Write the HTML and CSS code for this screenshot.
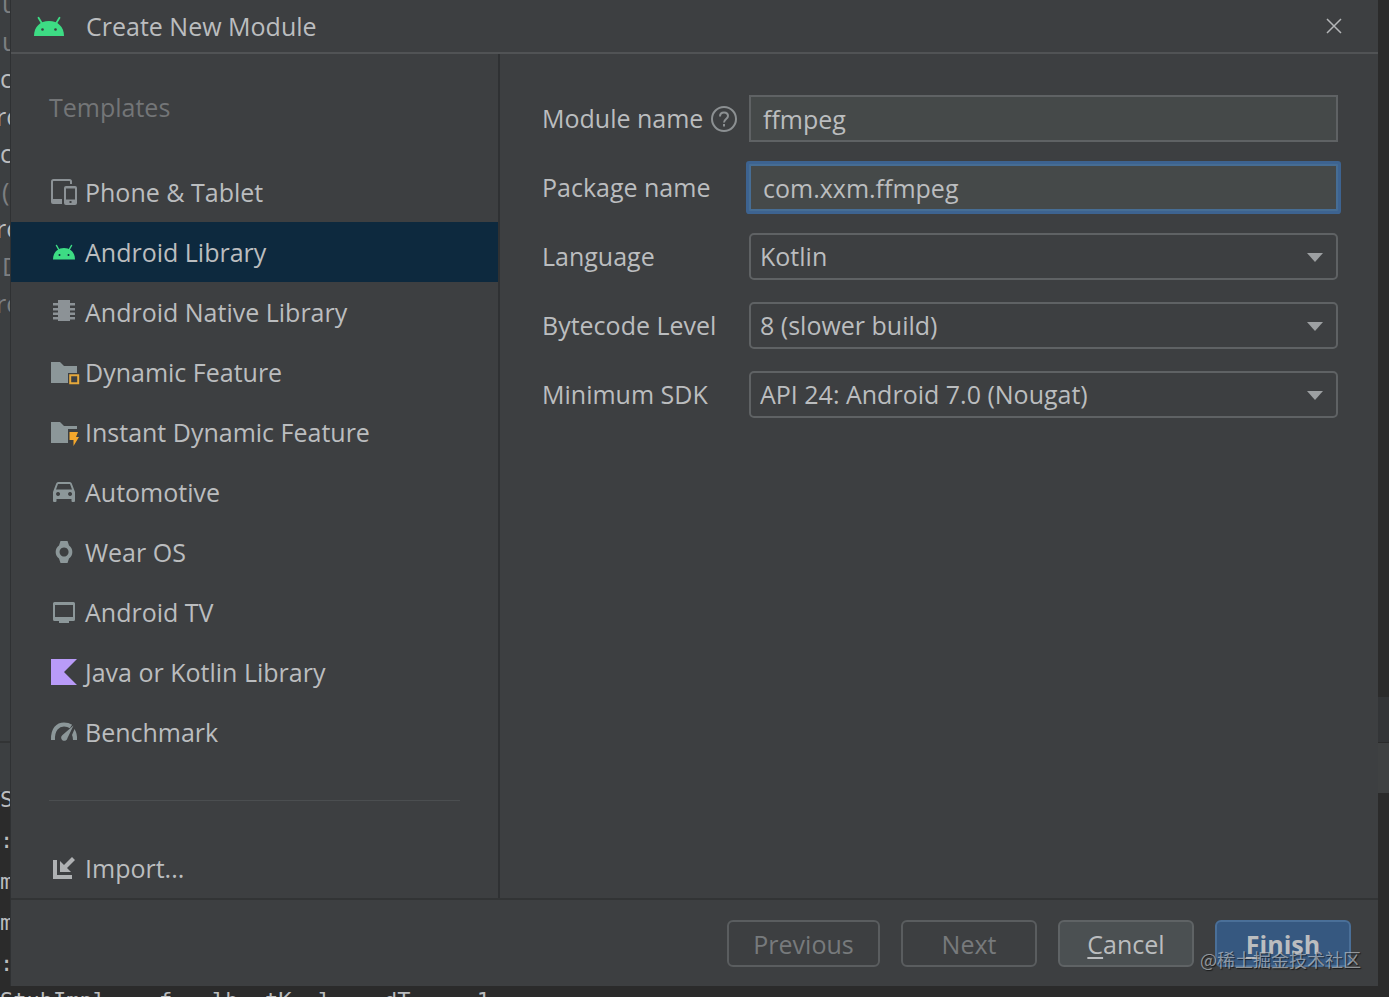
FILE: index.html
```html
<!DOCTYPE html>
<html lang="en">
<head>
  <meta charset="UTF-8">
  <meta name="viewport" content="width=device-width, initial-scale=1.0">
  <title>Create New Module</title>
  <link rel="stylesheet" href="styles.css">
</head>
<body>

<!-- Editor behind the dialog, left edge -->
<div class="editor-left">
  <div class="tree">
    <span class="dim">u</span>
    <span class="dim">u</span>
    <span>c</span>
    <span class="cut">ro</span>
    <span>c</span>
    <span class="dim">(</span>
    <span class="cut">ro</span>
    <span class="dim">D</span>
    <span class="dim cut">ro</span>
  </div>
  <div class="tool-bar"></div>
  <div class="console">
    <span>S</span>
    <span>:</span>
    <span>m</span>
    <span>m</span>
    <span>:</span>
  </div>
</div>

<main class="dialog">
  <header class="title-bar">
    <svg class="logo" width="30" height="20" viewBox="0 0 30 20">
      <path d="M0 20C0 11 6 5 15 5s15 6 15 15z" fill="#3ddc84"/>
      <path d="M4.500 1.800L8 7.500M25.500 1.800L22 7.500" stroke="#3ddc84" stroke-width="1.800" stroke-linecap="round"/>
      <circle cx="8.500" cy="13.500" r="1.300" fill="#3c3f41"/>
      <circle cx="21.500" cy="13.500" r="1.300" fill="#3c3f41"/>
    </svg>
    <h1>Create New Module</h1>
    <button class="close" type="button" aria-label="Close">
      <svg width="16" height="16" viewBox="0 0 16 16"><path d="M1 1l14 14M15 1L1 15" stroke="#b4b6b8" stroke-width="1.500"/></svg>
    </button>
  </header>

  <div class="content">
    <nav class="templates">
      <h2>Templates</h2>
      <ul>
        <li><button type="button">
          <svg width="28" height="28" viewBox="0 0 28 28" fill="#8c9296">
            <path d="M2 22V3.500a1.500 1.500 0 0 1 1.500-1.500h16A1.500 1.500 0 0 1 21 3.500V6" fill="none" stroke="#8c9296" stroke-width="2"/>
            <path d="M1 21h11v5H3a2 2 0 0 1-2-2z"/>
            <path fill-rule="evenodd" d="M16 8h9a2 2 0 0 1 2 2v15a2 2 0 0 1-2 2h-9a2 2 0 0 1-2-2V10a2 2 0 0 1 2-2zm0 2.500v11h9v-11zm3.500 12.500v2h2v-2z"/>
          </svg>
          Phone &amp; Tablet
        </button></li>
        <li><button type="button" class="selected">
          <svg width="28" height="28" viewBox="0 0 28 28">
            <path d="M3 21.500C3 14.500 7.500 10 14 10s11 4.500 11 11.500z" fill="#3ddc84"/>
            <path d="M6.500 7.500l2.500 4.500M21.500 7.500L19 12" stroke="#3ddc84" stroke-width="1.500" stroke-linecap="round"/>
            <circle cx="9.500" cy="17" r="1" fill="#0d293e"/>
            <circle cx="18.500" cy="17" r="1" fill="#0d293e"/>
          </svg>
          Android Library
        </button></li>
        <li><button type="button">
          <svg width="28" height="28" viewBox="0 0 28 28" fill="#8c9296">
            <path d="M8 2h12v21H8z"/>
            <path d="M3 5h6v2.500H3zM3 10h6v2.500H3zM3 14.500h6V17H3zM3 19h6v2.500H3zM19 5h6v2.500h-6zM19 10h6v2.500h-6zM19 14.500h6V17h-6zM19 19h6v2.500h-6z"/>
          </svg>
          Android Native Library
        </button></li>
        <li><button type="button">
          <svg width="28" height="28" viewBox="0 0 28 28">
            <path d="M1 4h9l4 4h13v7h-9v10H1z" fill="#8c9799"/>
            <path d="M20.200 17.200h8v8h-8z" fill="none" stroke="#e5a83b" stroke-width="2"/>
          </svg>
          Dynamic Feature
        </button></li>
        <li><button type="button">
          <svg width="28" height="28" viewBox="0 0 28 28">
            <path d="M1 4h9l4 4h13v3h-9v14H1z" fill="#8c9799"/>
            <path d="M19.500 14H28l-2 5h3l-5.500 9v-6h-4z" fill="#f4a72c"/>
          </svg>
          Instant Dynamic Feature
        </button></li>
        <li><button type="button">
          <svg width="28" height="28" viewBox="0 0 28 28" fill="#8c9799">
            <path fill-rule="evenodd" d="M3 14L6.200 5.500Q6.700 4 8.200 4h11.600q1.500 0 2 1.500L25 14v9q0 1-1 1h-1.500q-1 0-1-1v-2h-15v2q0 1-1 1H4q-1 0-1-1zm3-2.500h16L20 6H8zm2 2.500a2 2 0 1 0 .1 0zm12 0a2 2 0 1 0 .1 0z"/>
          </svg>
          Automotive
        </button></li>
        <li><button type="button">
          <svg width="28" height="28" viewBox="0 0 28 28" fill="#8c9799">
            <path fill-rule="evenodd" d="M10.500 3h7l1.500 4.500a8 8 0 0 1 0 13L17.500 25h-7L9 20.500a8 8 0 0 1 0-13zM14 9.500a4.500 4.500 0 1 0 .1 0z"/>
          </svg>
          Wear OS
        </button></li>
        <li><button type="button">
          <svg width="28" height="28" viewBox="0 0 28 28" fill="#8c9799">
            <path fill-rule="evenodd" d="M4.500 4h19Q25 4 25 5.500v16q0 1.500-1.500 1.500H19v2H9v-2H4.500Q3 23 3 21.500v-16Q3 4 4.500 4zM5 7v12h18V7z"/>
          </svg>
          Android TV
        </button></li>
        <li><button type="button">
          <svg width="28" height="28" viewBox="0 0 28 28"><path d="M1 1h26L14 14l13 13H1z" fill="#b99bf8"/></svg>
          Java or Kotlin Library
        </button></li>
        <li><button type="button">
          <svg width="28" height="28" viewBox="0 0 28 28" fill="#8c9799">
            <path d="M3 22C2.500 11 8 6.500 14 6.500q4 0 7 2" fill="none" stroke="#8c9799" stroke-width="4"/>
            <path d="M23.500 7.500L17.500 20a3.200 3.200 0 1 1-5-3z"/>
            <path d="M24.500 11Q27.500 16 27 22h-4q0-3-1-5z"/>
          </svg>
          Benchmark
        </button></li>
      </ul>
      <hr>
      <button type="button" class="import">
        <svg width="28" height="28" viewBox="0 0 28 28" fill="#afb1b3">
          <path d="M3 6h4v15h15v4H3z"/>
          <path d="M10 7l4 4 8-8 3 3-8 8 4 4H10z"/>
        </svg>
        Import...
      </button>
    </nav>

    <form class="settings">
      <div class="label-box">
        <label for="moduleName">Module name</label>
        <svg width="26" height="26" viewBox="0 0 26 26" fill="none" stroke="#8c9092" stroke-width="2">
          <circle cx="13" cy="13" r="12"/>
          <path d="M9 10.500C9 7.800 10.700 6.500 13 6.500s4 1.400 4 3.500c0 3-4 3-4 6.500M13 18v2.500"/>
        </svg>
      </div>
      <input type="text" id="moduleName" value="ffmpeg">

      <label for="packageName">Package name</label>
      <input type="text" id="packageName" class="focused" value="com.xxm.ffmpeg">

      <label for="language">Language</label>
      <div class="select">
        <select id="language"><option>Kotlin</option></select>
        <svg width="16" height="10" viewBox="0 0 16 10"><path d="M0 1h16L8 10z" fill="#9da0a2"/></svg>
      </div>

      <label for="bytecode">Bytecode Level</label>
      <div class="select">
        <select id="bytecode"><option>8 (slower build)</option></select>
        <svg width="16" height="10" viewBox="0 0 16 10"><path d="M0 1h16L8 10z" fill="#9da0a2"/></svg>
      </div>

      <label for="minSdk">Minimum SDK</label>
      <div class="select">
        <select id="minSdk"><option>API 24: Android 7.0 (Nougat)</option></select>
        <svg width="16" height="10" viewBox="0 0 16 10"><path d="M0 1h16L8 10z" fill="#9da0a2"/></svg>
      </div>
    </form>
  </div>

  <footer class="actions">
    <button type="button" class="wide" disabled>Previous</button>
    <button type="button" disabled>Next</button>
    <button type="button" class="cancel"><u>C</u>ancel</button>
    <button type="button" class="finish"><u>F</u>inish</button>
  </footer>
</main>

<!-- Editor behind the dialog, right edge -->
<div class="editor-right">
  <div class="gutter"></div>
  <div class="gutter-bar"></div>
</div>

<div class="editor-bottom">StubImpl    f   lb  tK  l    dT     1</div>

<div class="watermark">@稀土掘金技术社区</div>

</body>
</html>
```
FILE: styles.css
```css
* {
  margin: 0;
  padding: 0;
  box-sizing: border-box;
}
body {
  display: grid;
  grid-template-columns: 11px 1fr 11px;
  grid-template-rows: 1fr 11px;
  min-height: 100vh;
  overflow-x: hidden;
  position: relative;
  background-color: #2b2b2b;
  color: #bbbdbf;
  font-family: "Open Sans", "Noto Sans", sans-serif;
  font-size: 25px;
  line-height: 34px;
}
button, input, select {
  font: inherit;
  color: inherit;
}

/* Editor */
.editor-left {
  display: flex;
  flex-direction: column;
  height: 0;
  min-height: 100%;
  overflow: hidden;
  border-right: 1px solid #2f3133;
}
.tree {
  display: flex;
  flex-direction: column;
  flex-shrink: 0;
  justify-content: space-between;
  height: 334px;
  margin-top: -14px;
  background-color: #3c3f41;
}
.tree .dim {
  color: #7c7f81;
  padding-left: 2px;
}
.tree .cut {
  padding-left: 0;
  text-indent: -4px;
}
.tool-bar {
  flex-shrink: 0;
  height: 472px;
  background: linear-gradient(#3c3f41 421px, #323435 421px, #323435 423px, #3c3f41 423px);
}
.console {
  line-height: 41px;
  margin-top: -13px;
}
.console span {
  display: block;
}
.console, .editor-bottom {
  font-family: "DejaVu Sans Mono", monospace;
  font-size: 22px;
}
.editor-right .gutter {
  height: 46px;
  margin-top: 697px;
  background-color: #333537;
  border-bottom: 1px solid #2b2b2b;
}
.editor-right .gutter-bar {
  height: 50px;
  background-color: #3f4142;
}
.editor-bottom {
  grid-column: 1 / -1;
  line-height: 30px;
  white-space: pre;
  overflow: hidden;
}

/* Dialog */
.dialog {
  display: flex;
  flex-direction: column;
  background-color: #3d3f41;
}
.title-bar {
  display: flex;
  align-items: center;
  gap: 22px;
  height: 54px;
  padding: 0 36px 0 23px;
  border-bottom: 2px solid #515355;
}
.title-bar h1 {
  flex: 1;
  font-size: 25px;
  font-weight: normal;
}
.close {
  display: flex;
  background: none;
  border: none;
}
.content {
  flex: 1;
  display: flex;
}

/* Templates */
.templates {
  width: 489px;
  border-right: 2px solid #2f3133;
}
.templates h2 {
  padding: 36px 38px 38px;
  font-size: 25px;
  font-weight: normal;
  color: #737577;
}
.templates ul {
  list-style: none;
}
.templates button {
  display: flex;
  align-items: center;
  gap: 7px;
  width: 100%;
  height: 60px;
  padding-left: 39px;
  background: none;
  border: none;
  text-align: left;
}
.templates button svg {
  overflow: visible;
}
.templates .selected {
  background-color: #0d293e;
}
.templates hr {
  margin: 38px 38px 37px;
  border: none;
  border-top: 1px solid #4b4e50;
}

/* Form */
.settings {
  flex: 1;
  display: grid;
  grid-template-columns: 185px 1fr;
  gap: 22px;
  align-content: start;
  align-items: center;
  padding: 41px 40px 41px 42px;
}
.settings label {
  padding-bottom: 2px;
}
.label-box {
  display: flex;
  align-items: center;
  gap: 8px;
  white-space: nowrap;
}
.label-box svg {
  flex-shrink: 0;
}
.settings input, .settings select {
  width: 100%;
  height: 47px;
  border: 2px solid #5f6264;
}
.settings input {
  padding: 0 12px;
  background-color: #454949;
  outline: none;
}
.settings input.focused {
  border-color: #466d94;
  box-shadow: 0 0 0 3px #3d6390;
  border-radius: 1px;
}
.select {
  display: grid;
  align-items: center;
}
.select select, .select svg {
  grid-area: 1 / 1;
}
.select select {
  appearance: none;
  padding: 0 9px 2px;
  background-color: #3d3f41;
  border-radius: 5px;
}
.select svg {
  justify-self: end;
  margin-right: 15px;
  pointer-events: none;
}

/* Buttons */
.actions {
  display: flex;
  justify-content: flex-end;
  gap: 21px;
  padding: 20px 27px 19px;
  border-top: 2px solid #323435;
}
.actions button {
  width: 136px;
  height: 47px;
  background: none;
  border: 2px solid #5a5d5f;
  border-radius: 6px;
}
.actions .wide {
  width: 153px;
}
.actions button:disabled {
  color: #777a7c;
}
.actions .cancel {
  background-color: #4b5052;
  border-color: #5f6365;
}
.actions .finish {
  background-color: #365880;
  border-color: #4a6f98;
  font-weight: bold;
}
.actions u {
  text-underline-offset: 3px;
}
.watermark {
  position: absolute;
  right: 28px;
  bottom: 24px;
  font-family: "Noto Sans CJK SC", sans-serif;
  font-size: 18px;
  line-height: 27px;
  color: rgba(200, 205, 210, 0.65);
  text-shadow: 1px 1px 1px rgba(0, 0, 0, 0.6);
  pointer-events: none;
}
```
